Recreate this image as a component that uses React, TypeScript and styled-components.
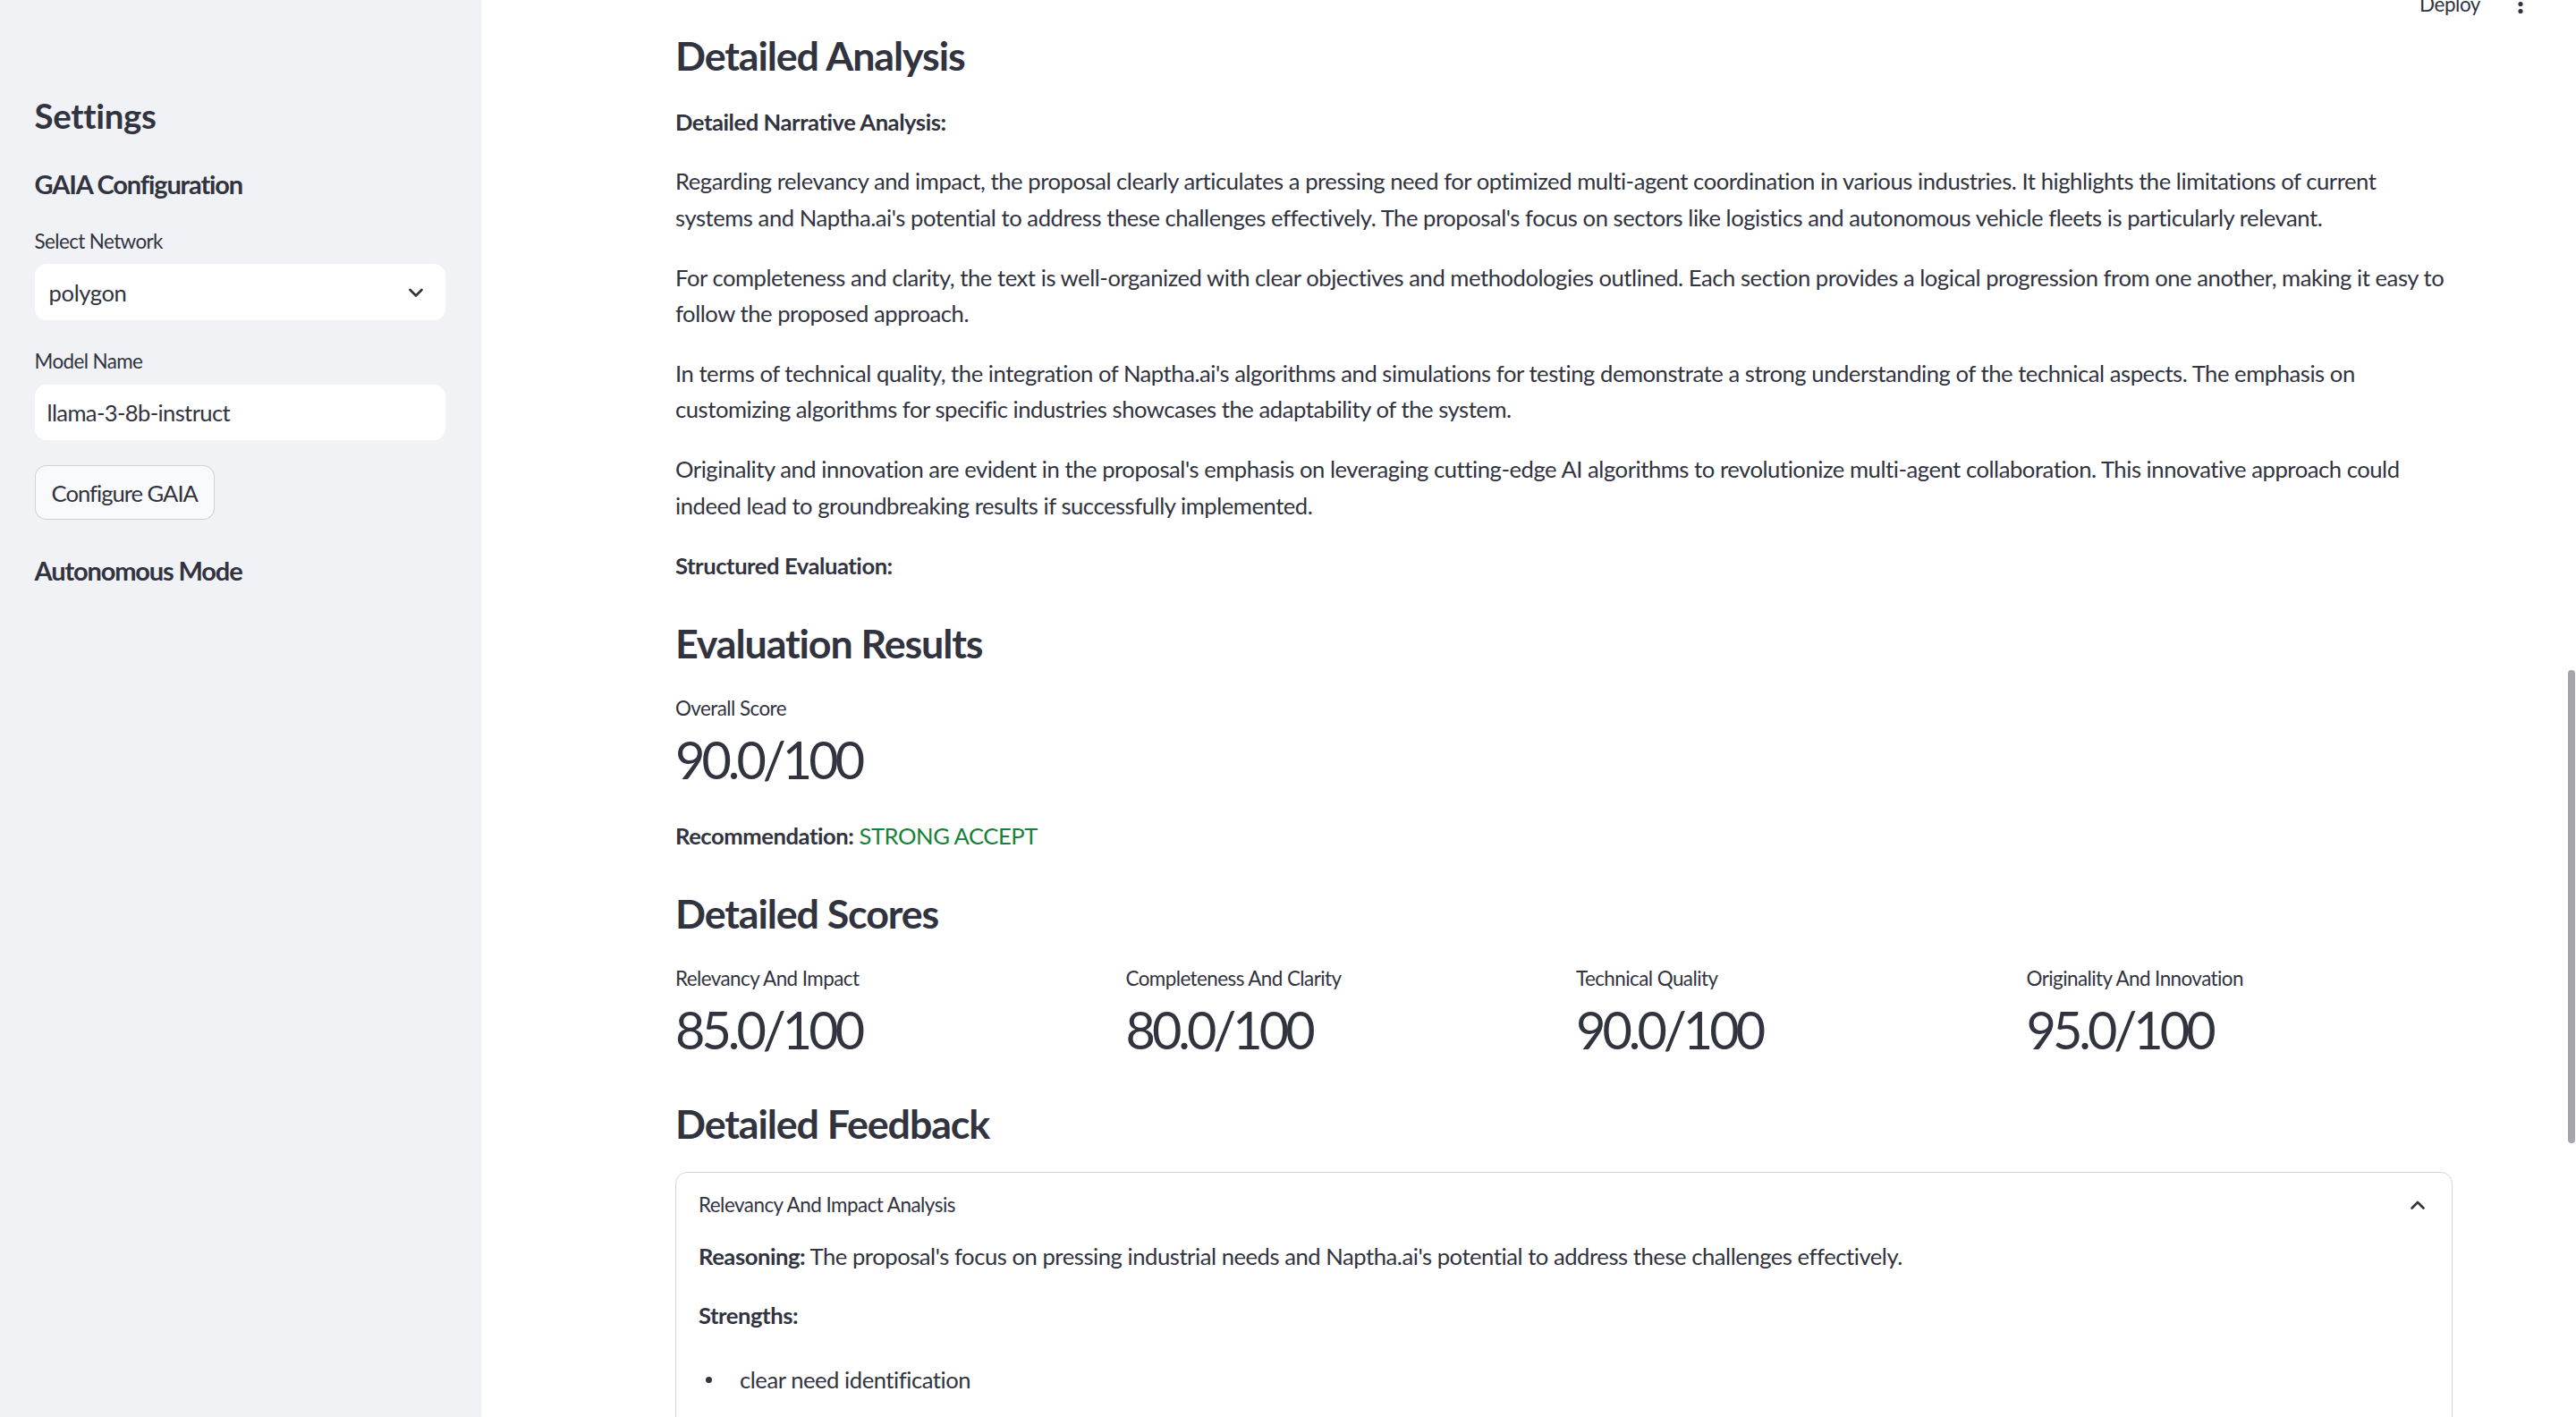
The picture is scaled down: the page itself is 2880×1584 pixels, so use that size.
import styled, { createGlobalStyle } from "styled-components";

const GlobalStyle = createGlobalStyle`
  html, body {
    margin: 0;
    padding: 0;
  }
  body {
    font-family: "Lato", "Liberation Sans", sans-serif;
    color: #31333f;
    background: #ffffff;
    overflow: hidden;
  }
  * {
    box-sizing: border-box;
  }
`;

const paragraphs = [
  "Regarding relevancy and impact, the proposal clearly articulates a pressing need for optimized multi-agent coordination in various industries. It highlights the limitations of current systems and Naptha.ai's potential to address these challenges effectively. The proposal's focus on sectors like logistics and autonomous vehicle fleets is particularly relevant.",
  "For completeness and clarity, the text is well-organized with clear objectives and methodologies outlined. Each section provides a logical progression from one another, making it easy to follow the proposed approach.",
  "In terms of technical quality, the integration of Naptha.ai's algorithms and simulations for testing demonstrate a strong understanding of the technical aspects. The emphasis on customizing algorithms for specific industries showcases the adaptability of the system.",
  "Originality and innovation are evident in the proposal's emphasis on leveraging cutting-edge AI algorithms to revolutionize multi-agent collaboration. This innovative approach could indeed lead to groundbreaking results if successfully implemented.",
];

const scores = [
  { label: "Relevancy And Impact", value: "85.0/100" },
  { label: "Completeness And Clarity", value: "80.0/100" },
  { label: "Technical Quality", value: "90.0/100" },
  { label: "Originality And Innovation", value: "95.0/100" },
];

const ChevronDown = () => (
  <svg width="24" height="24" viewBox="0 0 24 24" fill="none">
    <path d="M5.5 9l6.5 6.5L18.5 9" stroke="#31333f" strokeWidth="2.6" strokeLinecap="round" strokeLinejoin="round" />
  </svg>
);

const ChevronUp = () => (
  <svg width="24" height="24" viewBox="0 0 24 24" fill="none">
    <path d="M5.5 15.5L12 9l6.5 6.5" stroke="#31333f" strokeWidth="2.6" strokeLinecap="round" strokeLinejoin="round" />
  </svg>
);

const App = (): JSX.Element => {
  return (
    <>
      <GlobalStyle />
      <Page>
        <Sidebar>
          <SideTitle>Settings</SideTitle>
          <SideSubtitle $mt={36}>GAIA Configuration</SideSubtitle>
          <FieldLabel $mt={28}>Select Network</FieldLabel>
          <SelectBox>
            <span>polygon</span>
            <ChevronDown />
          </SelectBox>
          <FieldLabel $mt={28}>Model Name</FieldLabel>
          <TextInput>llama-3-8b-instruct</TextInput>
          <SideButton>Configure GAIA</SideButton>
          <SideSubtitle $mt={39}>Autonomous Mode</SideSubtitle>
        </Sidebar>

        <Main>
          <Heading>Detailed Analysis</Heading>
          <Text>
            <strong>Detailed Narrative Analysis:</strong>
          </Text>
          {paragraphs.map((p) => (
            <Text key={p.slice(0, 20)}>{p}</Text>
          ))}
          <Text>
            <strong>Structured Evaluation:</strong>
          </Text>

          <Heading>Evaluation Results</Heading>
          <Metric>
            <MetricLabel>Overall Score</MetricLabel>
            <MetricValue>90.0/100</MetricValue>
          </Metric>
          <Text>
            <strong>Recommendation:</strong> <Green>STRONG ACCEPT</Green>
          </Text>

          <Heading>Detailed Scores</Heading>
          <ScoreGrid>
            {scores.map((s) => (
              <Metric key={s.label}>
                <MetricLabel>{s.label}</MetricLabel>
                <MetricValue>{s.value}</MetricValue>
              </Metric>
            ))}
          </ScoreGrid>

          <Heading>Detailed Feedback</Heading>
          <Expander>
            <ExpanderHeader>
              <span>Relevancy And Impact Analysis</span>
              <ChevronUp />
            </ExpanderHeader>
            <ExpanderBody>
              <Text>
                <strong>Reasoning:</strong> The proposal's focus on pressing industrial needs and
                Naptha.ai's potential to address these challenges effectively.
              </Text>
              <Text>
                <strong>Strengths:</strong>
              </Text>
              <List>
                <li>clear need identification</li>
              </List>
            </ExpanderBody>
          </Expander>
        </Main>

        <TopBar>
          <DeployButton>Deploy</DeployButton>
          <svg width="24" height="41" viewBox="0 0 24 41">
            <circle cx="12" cy="12.5" r="2.6" fill="#31333f" />
            <circle cx="12" cy="20.5" r="2.6" fill="#31333f" />
            <circle cx="12" cy="28.5" r="2.6" fill="#31333f" />
          </svg>
        </TopBar>
        <ScrollThumb />
      </Page>
    </>
  );
};

export default App;

const Page = styled.div`
  position: relative;
  display: flex;
  width: 2880px;
  height: 1584px;
  overflow: hidden;
`;

const Sidebar = styled.aside`
  flex: 0 0 538px;
  display: flex;
  flex-direction: column;
  align-items: flex-start;
  padding: 106px 40px 0 38.6px;
  background: #f0f2f6;
`;

const SideTitle = styled.h2`
  margin: 0;
  font-size: 38.4px;
  line-height: 46px;
  font-weight: 700;
  letter-spacing: -0.3px;
`;

const SideSubtitle = styled.h3<{ $mt: number }>`
  margin: ${(p) => p.$mt}px 0 0;
  font-size: 29px;
  line-height: 36px;
  font-weight: 700;
  letter-spacing: -1.15px;
`;

const FieldLabel = styled.label<{ $mt: number }>`
  margin-top: ${(p) => p.$mt}px;
  font-size: 22.4px;
  line-height: 36px;
  letter-spacing: -0.6px;
`;

const SelectBox = styled.div`
  margin-top: 7px;
  width: 100%;
  height: 63px;
  display: flex;
  align-items: center;
  justify-content: space-between;
  padding: 0 21px 0 16px;
  background: #ffffff;
  border-radius: 13px;
  font-size: 25.6px;
  letter-spacing: -0.4px;
`;

const TextInput = styled.div`
  margin-top: 8px;
  width: 100%;
  height: 62px;
  display: flex;
  align-items: center;
  padding: 0 14px;
  background: #ffffff;
  border-radius: 13px;
  font-size: 25.6px;
  letter-spacing: -0.65px;
`;

const SideButton = styled.button`
  margin-top: 28px;
  height: 61px;
  padding: 0 18px;
  font-family: inherit;
  font-size: 25.6px;
  letter-spacing: -1px;
  color: #31333f;
  background: #f9fafb;
  border: 1.6px solid rgba(49, 51, 63, 0.2);
  border-radius: 13px;
`;

const Main = styled.main`
  flex: 1;
  display: flex;
  flex-direction: column;
  gap: 26.5px;
  padding: 22px 138px 0 217px;
  min-width: 0;

  & > * {
    flex-shrink: 0;
  }
`;

const Heading = styled.h3`
  margin: 0;
  padding-top: 13px;
  font-size: 44.8px;
  line-height: 54px;
  font-weight: 700;
  letter-spacing: -1.1px;
`;

const Text = styled.p`
  margin: 0;
  font-size: 25.6px;
  line-height: 40.4px;
  letter-spacing: -0.45px;

  strong {
    font-weight: 700;
  }
`;

const Green = styled.span`
  color: #158237;
`;

const Metric = styled.div`
  display: flex;
  flex-direction: column;
  gap: 3.5px;
  padding-bottom: 5px;
`;

const MetricLabel = styled.div`
  margin-top: 2px;
  font-size: 22.4px;
  line-height: 36px;
  letter-spacing: -0.55px;
`;

const MetricValue = styled.div`
  font-size: 57.6px;
  line-height: 69px;
  letter-spacing: -4px;
`;

const ScoreGrid = styled.div`
  display: grid;
  grid-template-columns: repeat(4, 1fr);
  column-gap: 27px;
`;

const Expander = styled.section`
  border: 1.6px solid rgba(49, 51, 63, 0.2);
  border-radius: 13px;
  height: 400px;
`;

const ExpanderHeader = styled.div`
  display: flex;
  align-items: center;
  justify-content: space-between;
  padding: 18px 26px 0 25px;
  font-size: 22.4px;
  line-height: 36px;
  letter-spacing: -0.5px;
`;

const ExpanderBody = styled.div`
  display: flex;
  flex-direction: column;
  gap: 25.6px;
  padding: 19px 25px 0;
`;

const List = styled.ul`
  margin: 6px 0 0;
  padding: 0;
  list-style: none;
  font-size: 25.6px;
  line-height: 40.4px;
  letter-spacing: -0.45px;

  li {
    position: relative;
    padding-left: 46px;
  }

  li::before {
    content: "";
    position: absolute;
    left: 8px;
    top: 17px;
    width: 7px;
    height: 7px;
    border-radius: 50%;
    background: #31333f;
  }
`;

const TopBar = styled.header`
  position: absolute;
  top: -16.5px;
  right: 50px;
  display: flex;
  align-items: flex-start;
  gap: 33px;
`;

const DeployButton = styled.span`
  font-size: 22.4px;
  line-height: 41px;
  letter-spacing: -0.4px;
`;

const ScrollThumb = styled.div`
  position: absolute;
  right: 1px;
  top: 749px;
  width: 8px;
  height: 529px;
  border-radius: 4px;
  background: #a5a6ab;
`;
